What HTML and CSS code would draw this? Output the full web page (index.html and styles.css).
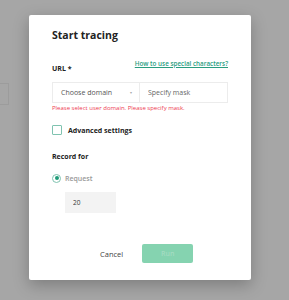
FILE: index.html
```html
<!DOCTYPE html>
<html lang="en">
<head>
    <meta charset="UTF-8">
    <title>Start tracing</title>
    <link rel="stylesheet" href="styles.css">
</head>
<body>
    <div class="page-ghost"></div>

    <div class="modal">
        <h2 class="modal-title">Start tracing</h2>

        <div class="url-head">
            <label class="field-label">URL *</label>
            <a class="help-link" href="#">How to use special characters?</a>
        </div>

        <div class="url-row">
            <div class="select-box">
                <span>Choose domain</span>
                <span class="caret">&#9662;</span>
            </div>
            <input class="mask-input" type="text" placeholder="Specify mask">
        </div>
        <div class="error-text">Please select user domain. Please specify mask.</div>

        <label class="check-row">
            <span class="checkbox"></span>
            <span class="check-label">Advanced settings</span>
        </label>

        <div class="field-label record-label">Record for</div>

        <div class="radio-row">
            <span class="radio"><span class="radio-dot"></span></span>
            <span class="radio-label">Request</span>
        </div>
        <input class="count-input" type="text" value="20">

        <div class="modal-actions">
            <button class="btn-cancel">Cancel</button>
            <button class="btn-run" disabled>Run</button>
        </div>
    </div>
</body>
</html>
```

FILE: styles.css
```css
body {
    margin: 0;
    height: 300px;
    overflow: hidden;
    background-color: #a6a6a6;
    font-family: "Open Sans", Arial, sans-serif;
    position: relative;
}

/* faint outline of the page under the overlay */
.page-ghost {
    position: absolute;
    left: -10px;
    top: 83px;
    width: 17px;
    height: 20px;
    border: 1px solid #9c9c9c;
}

.modal {
    position: relative;
    margin: 15px 0 0 29px;
    width: 222px;
    height: 265px;
    box-sizing: border-box;
    padding: 14px 23px 0 23px;
    background-color: white;
    border-radius: 2px;
    box-shadow: 0 5px 16px rgba(0, 0, 0, 0.25);
}

.modal-title {
    margin: 0;
    font-size: 10.5px;
    line-height: 13px;
    font-weight: 700;
    color: #222;
}

.url-head {
    display: flex;
    justify-content: space-between;
    align-items: flex-end;
    margin-top: 22px;
    height: 9px;
}

.field-label {
    font-size: 7px;
    font-weight: 700;
    color: #222;
    line-height: 9px;
}

.help-link {
    font-size: 6.3px;
    font-weight: 600;
    color: #2a9d7f;
    line-height: 8px;
    margin-bottom: 5.5px;
    text-decoration: underline;
}

.url-row {
    display: flex;
    margin-top: 9px;
    height: 21px;
}

.select-box {
    display: flex;
    align-items: center;
    justify-content: space-between;
    width: 87px;
    box-sizing: border-box;
    padding: 0 7px 0 8px;
    border: 1px solid #ececec;
    border-right: none;
    font-size: 7px;
    color: #555;
}

.caret {
    font-size: 4px;
    color: #aaa;
}

.mask-input {
    flex: 1;
    min-width: 0;
    box-sizing: border-box;
    border: 1px solid #ececec;
    padding: 0 8px;
    font-family: inherit;
    font-size: 7px;
    color: #555;
    outline: none;
}

.mask-input::placeholder {
    color: #666;
}

.error-text {
    margin-top: 1px;
    font-size: 6px;
    line-height: 8px;
    color: #ee3b50;
}

.check-row {
    display: flex;
    align-items: center;
    margin-top: 13px;
    height: 10px;
}

.checkbox {
    width: 10px;
    height: 10px;
    box-sizing: border-box;
    border: 1px solid #7fc3b0;
    border-radius: 1px;
}

.check-label {
    margin-left: 6px;
    font-size: 7px;
    font-weight: 700;
    color: #222;
}

.record-label {
    margin-top: 17px;
}

.radio-row {
    display: flex;
    align-items: center;
    margin-top: 12.5px;
    height: 9px;
}

.radio {
    display: flex;
    align-items: center;
    justify-content: center;
    width: 9px;
    height: 9px;
    box-sizing: border-box;
    border: 1px solid #7fc3b0;
    border-radius: 50%;
}

.radio-dot {
    width: 4px;
    height: 4px;
    border-radius: 50%;
    background-color: #1f9b78;
}

.radio-label {
    margin-left: 4px;
    font-size: 7px;
    font-weight: 600;
    color: #999;
}

.count-input {
    display: block;
    margin: 9.5px 0 0 13px;
    width: 51px;
    height: 21px;
    box-sizing: border-box;
    border: none;
    background-color: #f3f3f3;
    padding: 0 8px;
    font-family: inherit;
    font-size: 6.5px;
    color: #333;
    outline: none;
}

.modal-actions {
    display: flex;
    align-items: center;
    margin: 31px 0 0 48px;
}

.btn-cancel {
    background: none;
    border: none;
    padding: 0;
    font-family: inherit;
    font-size: 7.5px;
    color: #444;
}

.btn-run {
    margin-left: 19px;
    width: 51px;
    height: 19px;
    border: none;
    border-radius: 2px;
    background-color: #85d3b0;
    color: #a3dbc1;
    font-family: inherit;
    font-size: 7px;
    font-weight: 600;
}
```
